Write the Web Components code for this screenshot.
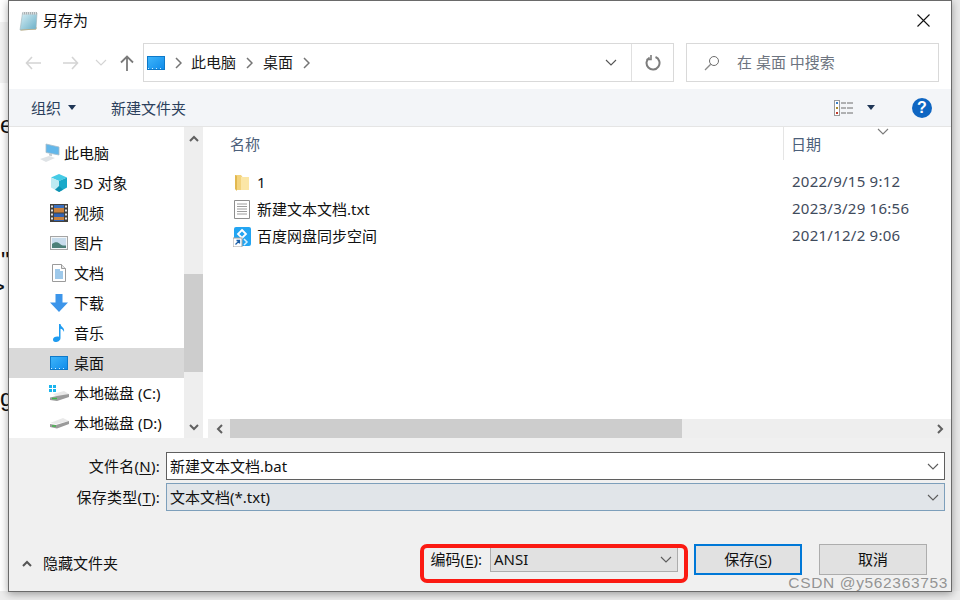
<!DOCTYPE html>
<html lang="zh-CN">
<head>
<meta charset="utf-8">
<title>另存为</title>
<style>
  html, body { margin: 0; height: 100%; }
  body {
    width: 960px;
    height: 600px;
    overflow: hidden;
    position: relative;
    background: #fff;
    font: 15px "Noto Sans", "Noto Sans CJK SC", sans-serif;
    color: #1a1a1a;
  }
</style>
</head>
<body>
<desk-backdrop></desk-backdrop>
<save-dialog></save-dialog>

<script>
const ICONS = {
  back: `<svg width="16" height="14" viewBox="0 0 16 14"><path d="M7 1 1.500 7 7 13M2 7h14" fill="none" stroke="currentColor" stroke-width="1.600"/></svg>`,
  forward: `<svg width="16" height="14" viewBox="0 0 16 14"><path d="M9 1l5.500 6L9 13M14 7H0" fill="none" stroke="currentColor" stroke-width="1.600"/></svg>`,
  up: `<svg width="14" height="16" viewBox="0 0 14 16"><path d="M1 7.500 7 1.500l6 6M7 2v14" fill="none" stroke="currentColor" stroke-width="1.800"/></svg>`,
  chevDown: `<svg width="12" height="7" viewBox="0 0 12 7"><path d="M1 1l5 5 5-5" fill="none" stroke="currentColor" stroke-width="1.100"/></svg>`,
  chevRight: `<svg width="7" height="12" viewBox="0 0 7 12"><path d="M1 1l5 5-5 5" fill="none" stroke="currentColor" stroke-width="1.500"/></svg>`,
  refresh: `<svg width="16" height="16" viewBox="0 0 16 16"><path d="M4.600 2.500A6.500 6.500 0 1 0 10.500 2" fill="none" stroke="currentColor" stroke-width="2"/><path d="M6 0v4.500H1.500" fill="none" stroke="currentColor" stroke-width="1.600"/></svg>`,
  search: `<svg width="16" height="16" viewBox="0 0 16 16"><circle cx="10" cy="6" r="4.500" fill="none" stroke="#6d6d6d" stroke-width="1"/><path d="M6.700 9.300 1 15" stroke="#8a8a8a" stroke-width="1.300"/></svg>`,
  close: `<svg width="13" height="13" viewBox="0 0 13 13"><path d="M.5.500l12 12M12.500.500l-12 12" stroke="#111" stroke-width="1.100"/></svg>`,
  notepad: `<svg width="19" height="20" viewBox="0 0 19 20"><defs><linearGradient id="n" x1="0" y1="0" x2="1" y2="1"><stop offset="0" stop-color="#d9f0f6"/><stop offset="1" stop-color="#68aec6"/></linearGradient></defs><path d="M3.500 2h14.500l-1 16-16 1z" fill="url(#n)" stroke="#9fb4b8" stroke-width=".6"/><path d="M3.500 1h14.500v2.500H3.500z" fill="#a9b0b2"/><path d="M4.500.500v3M6.500.500v3M8.500.500v3M10.500.500v3M12.500.500v3M14.500.500v3M16.500.500v3" stroke="#eef1f2" stroke-width=".7"/><path d="M1.500 19.500 17 18.500l1-2-.5-.2L17 18 2 18.800z" fill="#b59f68"/></svg>`,
  desktop: `<svg width="18" height="14" viewBox="0 0 18 14"><defs><linearGradient id="d" x1="0" y1="0" x2="1" y2="1"><stop offset="0" stop-color="#3fb6fb"/><stop offset="1" stop-color="#0f8bea"/></linearGradient></defs><rect x=".5" y=".500" width="17" height="13" fill="url(#d)" stroke="#0e79c9"/><path d="M1 12.500h16" stroke="#cdeafe" stroke-dasharray="1 3"/></svg>`,
  pc: `<svg width="22" height="20" viewBox="0 0 22 20"><path d="M7 1l13 3v8L7 9.500z" fill="#63b7ea" stroke="#a9bcc8" stroke-width=".8"/><path d="M1 16l9-3 6 2-9 4z" fill="#dfe3e6"/><path d="M10 10.500l3 .7v2l-3-.7z" fill="#c4ccd1"/></svg>`,
  cube: `<svg width="18" height="18" viewBox="0 0 18 18"><path d="M9 0 1 3.500 9 7l8-3.500z" fill="#45cbe6"/><path d="M1 3.500v10L9 18V7z" fill="#bdeaf2"/><path d="M17 3.500v10L9 18V7z" fill="#19a9c9"/><path d="M5 15.800 9 12l4 3.800L9 18z" fill="#0f92b2"/></svg>`,
  video: `<svg width="18" height="18" viewBox="0 0 18 18"><rect width="18" height="18" fill="#43403c"/><rect x="4" y="1" width="10" height="7.500" fill="#c9813c"/><rect x="4" y="9.500" width="10" height="7.500" fill="#2f62b5"/><rect x="4" y="1" width="10" height="3" fill="#3a6fbd"/><rect x="4" y="13" width="10" height="3" fill="#c9813c"/><path d="M1 1.500h2v2H1zM1 5.500h2v2H1zM1 9.500h2v2H1zM1 13.500h2v2H1zM15 1.500h2v2h-2zM15 5.500h2v2h-2zM15 9.500h2v2h-2zM15 13.500h2v2h-2z" fill="#e3e3e3"/></svg>`,
  picture: `<svg width="18" height="14" viewBox="0 0 18 14"><rect x=".5" y=".500" width="17" height="13" fill="#f3f6f8" stroke="#a5a5a5"/><rect x="2" y="2" width="14" height="10" fill="#c8dcec"/><path d="M2 8c3-2.500 6-2 8 0s4 1.500 6 1.500V12H2z" fill="#4c8078"/></svg>`,
  doc: `<svg width="16" height="18" viewBox="0 0 16 18"><path d="M1.500.500h9l4 4v13h-13z" fill="#fff" stroke="#9b9b9b"/><path d="M10.500.500v4h4" fill="#e6e6e6" stroke="#9b9b9b"/><path d="M4 6h5M4 8h8M4 10h8M4 12h8M4 14h8" stroke="#3f93d6"/></svg>`,
  download: `<svg width="18" height="18" viewBox="0 0 18 18"><path d="M5.500 0h7v8.500H18L9 18 0 8.500h5.500z" fill="#3c95ea"/></svg>`,
  music: `<svg width="12" height="18" viewBox="0 0 12 18"><path d="M6 0h1.500c.3 3 4.500 3.500 3.500 8-.6-2-2-3-3.500-3.200V14c0 2.500-2.500 4-5 4C.7 18 0 16.800 0 15.500 0 13.500 3 12 6 12.800z" fill="#1e9bf0"/></svg>`,
  diskC: `<svg width="20" height="18" viewBox="0 0 20 18"><path d="M0 1h3v3H0zM4 1h3v3H4zM0 5h3v3H0zM4 5h3v3H4z" fill="#19b4ee"/><path d="M4 10 15 7l5 3-12 3z" fill="#e9e9e9"/><path d="M1 13.500 8 12l12-2v3L8 17l-7-1z" fill="#9a9a9a"/><path d="M3 14.500h5" stroke="#42b34a" stroke-width="1.500"/></svg>`,
  diskD: `<svg width="20" height="12" viewBox="0 0 20 12"><path d="M1 6 14 1l6 3L7 7z" fill="#e9e9e9"/><path d="M1 7 7 8l13-4v3L8 11.500 1 10z" fill="#9a9a9a"/><path d="M3 9h4" stroke="#42b34a" stroke-width="1.500"/></svg>`,
  folder: `<svg width="16" height="18" viewBox="0 0 16 18"><path d="M1 1h6l1.500 2H15v13L3 16l-2-1z" fill="#f3d37d"/><path d="M7 3h8v13H7z" fill="#fbe6a6"/><path d="M1 1v14l2 2V2z" fill="#e2b84f"/></svg>`,
  txt: `<svg width="16" height="19" viewBox="0 0 16 19"><path d="M.5.500h15v18H.5z" fill="#fff" stroke="#8e8e8e"/><path d="M3 4h10M3 6.500h10M3 9h10M3 11.500h10M3 14h10" stroke="#9c9c9c"/></svg>`,
  baidu: `<svg width="18" height="20" viewBox="0 0 18 20"><rect x="1" y="0" width="17" height="19" rx="2" fill="#23a5f2"/><path d="M9 3l4 4-4 4-4-4z" fill="none" stroke="#fff" stroke-width="1.800"/><path d="M11 12l3 3-3 3" fill="none" stroke="#d8f0ff" stroke-width="1.500"/><rect x="0" y="11" width="9" height="9" fill="#fff" stroke="#a3a3a3"/><path d="M2.500 17.500 6 14M3.500 13.500H6.500V16.500" fill="none" stroke="#1b5fa8" stroke-width="1.300"/></svg>`,
  views: `<svg width="19" height="16" viewBox="0 0 19 16"><rect x=".5" y=".500" width="5" height="15" fill="#fff" stroke="#9a9a9a"/><rect x="2" y="2" width="2" height="2" fill="#3a7fc4"/><rect x="2" y="7" width="2" height="2" fill="#a98a2c"/><rect x="2" y="12" width="2" height="2" fill="#c0392b"/><path d="M7 3h5M13 3h6M7 8h5M13 8h6M7 13h5M13 13h6" stroke="#6d6d6d"/></svg>`,
  caret: `<svg width="8" height="5" viewBox="0 0 8 5"><path d="M0 0h8L4 5z" fill="currentColor"/></svg>`,
  scrollUp: `<svg width="10" height="7" viewBox="0 0 10 7"><path d="M1 6l4-4 4 4" fill="none" stroke="currentColor" stroke-width="2"/></svg>`,
  scrollDown: `<svg width="10" height="7" viewBox="0 0 10 7"><path d="M1 1l4 4 4-4" fill="none" stroke="currentColor" stroke-width="2"/></svg>`,
  scrollLeft: `<svg width="7" height="10" viewBox="0 0 7 10"><path d="M6 1 2 5l4 4" fill="none" stroke="currentColor" stroke-width="2"/></svg>`,
  scrollRight: `<svg width="7" height="10" viewBox="0 0 7 10"><path d="M1 1l4 4-4 4" fill="none" stroke="currentColor" stroke-width="2"/></svg>`
};

class UiIcon extends HTMLElement {
  connectedCallback() {
    if (!this.shadowRoot) this.attachShadow({ mode: "open" });
    this.shadowRoot.innerHTML = `<style>:host{display:inline-flex;align-items:center;justify-content:center;flex:none}svg{display:block}</style>${ICONS[this.getAttribute("name")] || ""}`;
  }
}

class DeskBackdrop extends HTMLElement {
  connectedCallback() {
    this.attachShadow({ mode: "open" }).innerHTML = `
    <style>
      :host { position: absolute; inset: 0; display: block; font: 24px/20px "Liberation Sans", sans-serif; color: #111; }
      .band { position: absolute; left: 0; width: 8px; }
      .r { left: auto; right: 0; }
      .bottom { position: absolute; left: 0; right: 0; top: 591px; bottom: 0; background: #ededed; }
      b { position: absolute; left: 0; font-weight: 400; }
    </style>
    <div class="band" style="top:0;height:22px;background:#fff"></div>
    <div class="band" style="top:22px;height:61px;background:#f3f3f3"></div>
    <div class="band r" style="top:0;height:600px;background:#e9e9e9"></div>
    <div class="bottom"></div>
    <b style="top:115px">e</b>
    <b style="top:251px;left:1px">"</b>
    <b style="top:277px;left:-9px">&gt;</b>
    <b style="top:388px">g</b>`;
  }
}

class DialogTitle extends HTMLElement {
  connectedCallback() {
    this.attachShadow({ mode: "open" }).innerHTML = `
    <style>
      :host { display: flex; align-items: center; height: 39px; padding: 0 21px 0 10px; flex: none; }
      .text { margin-left: 5px; padding-bottom: 2px; font-size: 15px; color: #111; flex: 1; }
    </style>
    <ui-icon name="notepad"></ui-icon><span class="text"><slot></slot></span><ui-icon name="close"></ui-icon>`;
  }
}

class NavBar extends HTMLElement {
  connectedCallback() {
    this.attachShadow({ mode: "open" }).innerHTML = `
    <style>
      :host { display: flex; height: 49px; padding: 3px 12px 7px 5px; box-sizing: border-box; flex: none; }
      .btn { display: flex; align-items: center; justify-content: center; color: #d4d4d4; }
      .w38 { width: 38px; } .w22 { width: 22px; } .w30 { width: 30px; color: #7a7a7a; }
      .addr { margin-left: 1px; width: 531px; display: flex; align-items: center; border: 1px solid #d9d9d9; box-sizing: border-box; color: #1a1a1a; }
      .addr ui-icon[name=desktop] { margin-left: 3px; }
      .sep { color: #757575; margin: 0 10px; }
      .first { margin-right: 9px; }
      .crumb { font-size: 15px; padding-bottom: 2px; }
      .grow { flex: 1; }
      .drop { color: #555; width: 40px; }
      .refresh { width: 42px; height: 100%; display: flex; align-items: center; justify-content: center; color: #7d7d7d; border-left: 1px solid #e0e0e0; box-sizing: border-box; }
      .search { margin-left: 12px; flex: 1; display: flex; align-items: center; border: 1px solid #d9d9d9; padding-left: 17px; color: #6d7480; font-size: 15px; box-sizing: border-box; }
      .search span { margin-left: 17px; padding-bottom: 2px; }
    </style>
    <div class="btn w38"><ui-icon name="back"></ui-icon></div>
    <div class="btn w38"><ui-icon name="forward"></ui-icon></div>
    <div class="btn w22"><ui-icon name="chevDown"></ui-icon></div>
    <div class="btn w30"><ui-icon name="up"></ui-icon></div>
    <div class="addr">
      <ui-icon name="desktop"></ui-icon>
      <ui-icon class="sep first" name="chevRight"></ui-icon><span class="crumb">此电脑</span>
      <ui-icon class="sep" name="chevRight"></ui-icon><span class="crumb">桌面</span>
      <ui-icon class="sep" name="chevRight"></ui-icon>
      <span class="grow"></span>
      <div class="btn drop"><ui-icon name="chevDown"></ui-icon></div>
      <div class="refresh"><ui-icon name="refresh"></ui-icon></div>
    </div>
    <div class="search"><ui-icon name="search"></ui-icon><span>在 桌面 中搜索</span></div>`;
  }
}

class ToolBar extends HTMLElement {
  connectedCallback() {
    this.attachShadow({ mode: "open" }).innerHTML = `
    <style>
      :host { display: flex; align-items: center; height: 38px; padding: 0 19px 0 22px; background: #f3f5f8; border-bottom: 1px solid #e5e5e5; box-sizing: border-box; color: #2b3f5c; font-size: 15px; flex: none; }
      .caret { margin-left: 7px; color: #1f3656; }
      .new { margin-left: 35px; flex: 1; }
      .vcaret { margin: 0 37px 0 14px; color: #1f3656; }
    </style>
    <span>组织</span><ui-icon class="caret" name="caret"></ui-icon>
    <span class="new">新建文件夹</span>
    <ui-icon class="view" name="views"></ui-icon>
    <ui-icon class="vcaret" name="caret"></ui-icon>
    <help-badge></help-badge>`;
  }
}

class HelpBadge extends HTMLElement {
  connectedCallback() {
    this.attachShadow({ mode: "open" }).innerHTML = `
    <style>
      :host { display: flex; width: 20px; height: 20px; align-items: center; justify-content: center; border-radius: 50%; background: #0f66c2; color: #fff; font: 700 16px/20px "Liberation Sans", sans-serif; }
    </style>?`;
  }
}

class ScrollBar extends HTMLElement {
  connectedCallback() {
    const horizontal = this.hasAttribute("horizontal");
    const before = +this.getAttribute("before");
    const size = +this.getAttribute("size");
    this.attachShadow({ mode: "open" }).innerHTML = `
    <style>
      :host { display: flex; flex: none; background: #eee; color: #606060; flex-direction: ${horizontal ? "row" : "column"}; ${horizontal ? "height:19px" : "width:19px"}; }
      .arrow { flex: none; display: flex; align-items: center; justify-content: center; ${horizontal ? "width:22px" : "height:22px"}; }
      .track { flex: 1; display: flex; flex-direction: ${horizontal ? "row" : "column"}; padding-${horizontal ? "left" : "top"}: ${before}px; }
      .thumb { background: #cdcdcd; ${horizontal ? "width" : "height"}: ${size}px; flex: none; }
    </style>
    <div class="arrow"><ui-icon name="${horizontal ? "scrollLeft" : "scrollUp"}"></ui-icon></div>
    <div class="track"><div class="thumb"></div></div>
    <div class="arrow"><ui-icon name="${horizontal ? "scrollRight" : "scrollDown"}"></ui-icon></div>`;
  }
}

class TreeItem extends HTMLElement {
  connectedCallback() {
    const top = this.hasAttribute("top");
    this.attachShadow({ mode: "open" }).innerHTML = `
    <style>
      :host { display: flex; align-items: center; height: 30px; padding-left: ${top ? 31 : 41}px; font-size: 15px; color: #111; }
      :host([selected]) { background: #d9d9d9; }
      .slot { width: ${top ? 20 : 18}px; display: flex; justify-content: center; }
      .text { margin-left: ${top ? 4 : 6}px; padding-bottom: 2px; white-space: nowrap; }
    </style>
    <div class="slot"><ui-icon name="${this.getAttribute("icon")}"></ui-icon></div>
    <span class="text"><slot></slot></span>`;
  }
}

class NavTree extends HTMLElement {
  connectedCallback() {
    this.attachShadow({ mode: "open" }).innerHTML = `
    <style>
      :host { display: flex; width: 194px; flex: none; }
      .items { width: 175px; padding-top: 11px; box-sizing: border-box; overflow: hidden; }
    </style>
    <div class="items"><slot></slot></div>
    <scroll-bar before="125" size="98"></scroll-bar>`;
  }
}

class FileRow extends HTMLElement {
  connectedCallback() {
    this.attachShadow({ mode: "open" }).innerHTML = `
    <style>
      :host { display: grid; grid-template-columns: 575px 1fr; align-items: center; height: 27px; font-size: 15px; color: #111; }
      .name { display: flex; align-items: center; padding-left: 25px; }
      .slot { width: 18px; display: flex; justify-content: center; }
      .text { margin-left: 6px; padding-bottom: 2px; }
      .date { padding: 0 0 4px 9px; color: #3f4b5c; letter-spacing: .25px; }
    </style>
    <div class="name"><div class="slot"><ui-icon name="${this.getAttribute("icon")}"></ui-icon></div><span class="text"><slot></slot></span></div>
    <div class="date">${this.getAttribute("date")}</div>`;
  }
}

class FileList extends HTMLElement {
  connectedCallback() {
    this.attachShadow({ mode: "open" }).innerHTML = `
    <style>
      :host { display: flex; flex-direction: column; flex: 1; margin-left: 5px; min-width: 0; }
      .head { display: grid; grid-template-columns: 575px 1fr; height: 33px; flex: none; color: #4c607a; font-size: 15px; align-items: center; position: relative; }
      .head div:first-child { padding-left: 22px; }
      .head div:nth-child(2) { border-left: 1px solid #e5e5e5; padding-left: 7px; height: 100%; box-sizing: border-box; display: flex; align-items: center; }
      .sort { position: absolute; left: 669px; top: 1px; color: #7a7a7a; }
      .rows { flex: 1; padding-top: 9px; }
    </style>
    <div class="head"><div>名称</div><div>日期</div><ui-icon class="sort" name="chevDown"></ui-icon></div>
    <div class="rows"><slot></slot></div>
    <scroll-bar horizontal before="0" size="452"></scroll-bar>`;
  }
}

class ComboBox extends HTMLElement {
  connectedCallback() {
    this.attachShadow({ mode: "open" }).innerHTML = `
    <style>
      :host { display: flex; align-items: center; box-sizing: border-box; height: 28px; border: 1px solid #5f5f5f; background: #fff; padding: 0 5px 0 3px; font-size: 15px; color: #111; }
      :host([kind=type]) { background: #e1e5e9; border-color: #7d9fbb; }
      :host([kind=plain]) { background: #e1e1e1; border-color: #adadad; height: 25px; }
      .v { flex: 1; padding-bottom: 2px; }
      ui-icon { color: #5c5c5c; }
    </style>
    <span class="v"><slot></slot></span><ui-icon name="chevDown"></ui-icon>`;
  }
}

class FormRow extends HTMLElement {
  connectedCallback() {
    this.attachShadow({ mode: "open" }).innerHTML = `
    <style>
      :host { display: grid; grid-template-columns: 151px 779px; column-gap: 6px; align-items: center; font-size: 15px; color: #111; }
      .label { text-align: right; padding-bottom: 2px; letter-spacing: .25px; }
    </style>
    <div class="label"><slot name="label"></slot></div><slot></slot>`;
  }
}

class DlgButton extends HTMLElement {
  connectedCallback() {
    this.attachShadow({ mode: "open" }).innerHTML = `
    <style>
      :host { display: flex; align-items: center; justify-content: center; box-sizing: border-box; width: 108px; height: 31px; padding-bottom: 2px; background: #e1e1e1; border: 1px solid #adadad; font-size: 15px; color: #111; flex: none; }
      :host([default]) { border: 2px solid #0078d7; }
    </style><slot></slot>`;
  }
}

class EncodingPick extends HTMLElement {
  connectedCallback() {
    this.attachShadow({ mode: "open" }).innerHTML = `
    <style>
      :host { display: flex; align-items: center; position: relative; font-size: 15px; color: #111; }
      .label { margin-right: 8px; padding-bottom: 2px; }
      u { text-underline-offset: 2px; }
      combo-box { width: 188px; }
      .mark { position: absolute; left: -11px; top: -3px; width: 268px; height: 39px; box-sizing: border-box; border: 4px solid #fb1a12; border-radius: 7px; pointer-events: none; }
    </style>
    <span class="label">编码(<u>E</u>):</span>
    <combo-box kind="plain">ANSI</combo-box>
    <div class="mark"></div>`;
  }
}

class SaveDialog extends HTMLElement {
  connectedCallback() {
    this.attachShadow({ mode: "open" }).innerHTML = `
    <style>
      :host { position: absolute; left: 8px; top: 0; width: 944px; height: 592px; box-sizing: border-box; display: flex; flex-direction: column; background: #fff; border: 1px solid #6a6a6a; box-shadow: 0 2px 8px rgba(0,0,0,.35); }
      .body { display: flex; height: 311px; flex: none; }
      .footer { flex: 1; background: #f0f0f0; padding-top: 14px; box-sizing: border-box; display: flex; flex-direction: column; }
      .rows { display: flex; flex-direction: column; gap: 3px; }
      .bottom { display: flex; align-items: center; margin-top: 33px; padding: 0 24px 0 13px; }
      .hide { display: flex; align-items: center; margin-top: 8px; font-size: 15px; color: #111; flex: 1; }
      .hide span { margin-left: 11px; padding-bottom: 2px; }
      .hide ui-icon { color: #555; }
      .gap16 { margin-left: 16px; }
      .gap17 { margin-left: 17px; }
      u { text-underline-offset: 2px; }
      .wm { position: absolute; right: 3px; bottom: -1px; font: 15.500px "Liberation Sans", sans-serif; letter-spacing: .65px; color: rgba(130,130,130,.85); white-space: nowrap; }
    </style>
    <dialog-title>另存为</dialog-title>
    <nav-bar></nav-bar>
    <tool-bar></tool-bar>
    <div class="body">
      <nav-tree>
        <tree-item top icon="pc">此电脑</tree-item>
        <tree-item icon="cube">3D 对象</tree-item>
        <tree-item icon="video">视频</tree-item>
        <tree-item icon="picture">图片</tree-item>
        <tree-item icon="doc">文档</tree-item>
        <tree-item icon="download">下载</tree-item>
        <tree-item icon="music">音乐</tree-item>
        <tree-item icon="desktop" selected>桌面</tree-item>
        <tree-item icon="diskC">本地磁盘 (C:)</tree-item>
        <tree-item icon="diskD">本地磁盘 (D:)</tree-item>
      </nav-tree>
      <file-list>
        <file-row icon="folder" date="2022/9/15 9:12">1</file-row>
        <file-row icon="txt" date="2023/3/29 16:56">新建文本文档.txt</file-row>
        <file-row icon="baidu" date="2021/12/2 9:06">百度网盘同步空间</file-row>
      </file-list>
    </div>
    <div class="footer">
      <div class="rows">
        <form-row><span slot="label">文件名(<u>N</u>):</span><combo-box>新建文本文档.bat</combo-box></form-row>
        <form-row><span slot="label">保存类型(<u>T</u>):</span><combo-box kind="type">文本文档(*.txt)</combo-box></form-row>
      </div>
      <div class="bottom">
        <div class="hide"><ui-icon name="scrollUp"></ui-icon><span>隐藏文件夹</span></div>
        <encoding-pick></encoding-pick>
        <dlg-button class="gap16" default>保存(<u>S</u>)</dlg-button>
        <dlg-button class="gap17">取消</dlg-button>
      </div>
      <div class="wm">CSDN @y562363753</div>
    </div>`;
  }
}

customElements.define("ui-icon", UiIcon);
customElements.define("desk-backdrop", DeskBackdrop);
customElements.define("dialog-title", DialogTitle);
customElements.define("nav-bar", NavBar);
customElements.define("tool-bar", ToolBar);
customElements.define("help-badge", HelpBadge);
customElements.define("scroll-bar", ScrollBar);
customElements.define("tree-item", TreeItem);
customElements.define("nav-tree", NavTree);
customElements.define("file-row", FileRow);
customElements.define("file-list", FileList);
customElements.define("combo-box", ComboBox);
customElements.define("form-row", FormRow);
customElements.define("dlg-button", DlgButton);
customElements.define("encoding-pick", EncodingPick);
customElements.define("save-dialog", SaveDialog);
</script>
</body>
</html>
